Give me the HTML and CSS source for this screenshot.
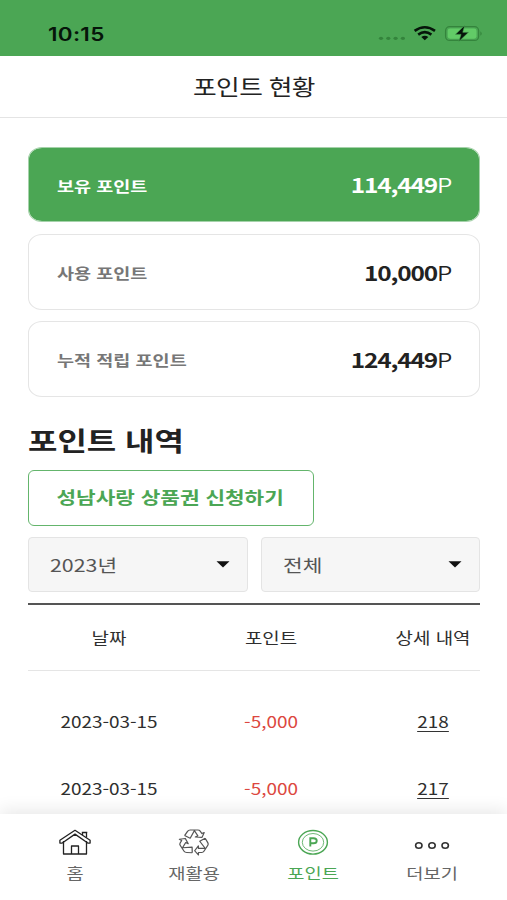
FILE: index.html
```html
<!DOCTYPE html>
<html lang="ko">
<head>
<meta charset="utf-8">
<title>포인트 현황</title>
<link rel="stylesheet" href="styles.css">
</head>
<body>
<div class="app">
  <header class="status">
    <span class="clock wide left">10:15</span>
    <svg class="indicators" width="108" height="24" viewBox="0 0 108 24">
      <g fill="#34843c"><ellipse cx="6" cy="15.3" rx="2.1" ry="1.6"/><ellipse cx="13.3" cy="15.3" rx="2.1" ry="1.6"/><ellipse cx="20.6" cy="15.3" rx="2.1" ry="1.6"/><ellipse cx="27.9" cy="15.3" rx="2.1" ry="1.6"/></g>
      <g fill="none" stroke="#06150a" stroke-width="2.6"><path d="M39.6 7.9Q49.8 .6 60 7.9"/><path d="M43.2 11.6Q49.8 6.8 56.4 11.6"/></g>
      <path d="M46.3 14Q49.8 11.7 53.3 14L49.8 17.3Z" fill="#06150a"/>
      <rect x="70.6" y="3.7" width="33" height="13.7" rx="4" fill="none" stroke="#34843c" stroke-width="1.3"/>
      <rect x="72.7" y="5.4" width="28.8" height="10.3" rx="2.4" fill="#62cb67"/>
      <path d="M105.4 8.2Q108 10.5 105.4 12.8Z" fill="#34843c"/>
      <path d="M89.8 2.2L80.3 11.4H86L83.8 18.6L93.6 9.3H87.8Z" fill="#06150a" stroke="#4ba654" stroke-width=".6"/>
    </svg>
  </header>
  <div class="titlebar"><h1 class="wide">포인트 현황</h1></div>

  <main>
    <section class="cards">
      <div class="card active"><span class="label wide left">보유 포인트</span><span class="value wide right">114,449<i>P</i></span></div>
      <div class="card"><span class="label wide left">사용 포인트</span><span class="value wide right">10,000<i>P</i></span></div>
      <div class="card"><span class="label wide left">누적 적립 포인트</span><span class="value wide right">124,449<i>P</i></span></div>
    </section>
    <h2 class="wide left">포인트 내역</h2>
    <button class="apply"><span class="wide">성남사랑 상품권 신청하기</span></button>
    <div class="filters">
      <div class="select"><span class="wide left">2023년</span><svg width="14" height="7" viewBox="0 0 14 7"><path d="M.5.3H13.5L7 6.5Z"/></svg></div>
      <div class="select"><span class="wide left">전체</span><svg width="14" height="7" viewBox="0 0 14 7"><path d="M.5.3H13.5L7 6.5Z"/></svg></div>
    </div>
    <div class="table">
      <div class="row head"><span class="wide">날짜</span><span class="wide">포인트</span><span class="wide">상세 내역</span></div>
      <div class="row"><span class="wide">2023-03-15</span><span class="wide minus">-5,000</span><span class="wide"><a>218</a></span></div>
      <div class="row"><span class="wide">2023-03-15</span><span class="wide minus">-5,000</span><span class="wide"><a>217</a></span></div>
    </div>
  </main>

  <nav>
    <div class="tab">
      <svg width="34" height="28" viewBox="0 0 34 28" fill="none" stroke="#222" stroke-width="1.3" stroke-linejoin="round">
        <path d="M5.5 13V26H28.5V13M13.5 26V18H20.5V26"/>
        <path d="M17 2.3L1.9 12.2V15L3.9 15.2L17 6.1L30.1 15.2L32.1 15V12.2Z"/>
        <path d="M24.5 7V4.5H28.5V9.5M23.8 4.3H29.3"/>
      </svg>
      <span class="wide">홈</span>
    </div>
    <div class="tab">
      <svg width="34" height="28" viewBox="0 0 34 28" fill="none" stroke="#555" stroke-width="1.25" stroke-linejoin="round">
        <g transform="translate(17 14.2) scale(.98 .87)">
          <path id="arrow" d="M-9.6-7.6L-6.6-12.4Q-5.6-14-4-14H4Q5.5-14 6.3-12.7L8-9.9L10.4-11.2L8.2-5.5L1.4-6L3.9-7.5L.2-13.6M-9.6-7.6L-3.9-4.5L.2-13"/>
          <use href="#arrow" transform="rotate(120)"/>
          <use href="#arrow" transform="rotate(240)"/>
        </g>
      </svg>
      <span class="wide">재활용</span>
    </div>
    <div class="tab on">
      <svg width="34" height="28" viewBox="0 0 34 28" fill="none" stroke="#4ba654">
        <ellipse cx="17" cy="14.3" rx="14.4" ry="11.8" stroke-width="1.4"/><ellipse cx="17" cy="14.3" rx="10.7" ry="8.8" stroke-width=".8"/>
        <path d="M14.3 18.6V10.2H17.5C21.8 10.2 21.8 15.3 17.5 15.3H14.3" stroke-width="1.9"/>
      </svg>
      <span class="wide">포인트</span>
    </div>
    <div class="tab">
      <svg width="38" height="28" viewBox="0 0 38 28" fill="none" stroke="#333" stroke-width="1.6">
        <ellipse cx="5.8" cy="17.5" rx="3.2" ry="2.8"/><ellipse cx="19" cy="17.5" rx="3.2" ry="2.8"/><ellipse cx="32.2" cy="17.5" rx="3.2" ry="2.8"/>
      </svg>
      <span class="wide">더보기</span>
    </div>
  </nav>
</div>
</body>
</html>
```

FILE: styles.css
```css
* { box-sizing: border-box; }
body { margin: 0; background: #fff; color: #222; font-family: "Noto Sans CJK KR", sans-serif; }
.app { height: 900px; overflow: hidden; display: flex; flex-direction: column; }
/* Type is set extended: every label is stretched horizontally. */
.wide { display: inline-block; white-space: nowrap; transform: scaleX(1.22); transform-origin: center; }
.left { transform-origin: left; }
.right { transform-origin: right; }
.status { height: 56px; flex: none; background: #4ba654; display: flex; justify-content: space-between; align-items: flex-start; padding: 23px 24px 0 48px; }
.clock { font: 600 18.4px/22px Inter, sans-serif; letter-spacing: .25px; color: #06150a; }
.indicators { flex: none; }
.titlebar { height: 62px; flex: none; border-bottom: 1px solid #e4e4e4; display: flex; align-items: center; justify-content: center; }
h1 { margin: 0 0 1px; font-size: 21.1px; line-height: 30px; font-weight: 400; letter-spacing: -.5px; }
main { flex: 1; min-height: 0; padding: 29px 27px 0 28px; overflow: hidden; }
.cards { display: grid; gap: 11px; }
.card { height: 76px; border: 1px solid #e5e5e5; border-radius: 14px / 12px; padding: 0 27px 0 28px; display: flex; align-items: center; justify-content: space-between; }
.card.active { height: 75px; margin-bottom: 1px; border-color: #a5d2aa; background: #4ba654 padding-box; color: #fff; }
.label { font-size: 15.2px; font-weight: 700; color: #777; }
.active .label { color: #fff; }
.value { font-size: 20px; font-weight: 700; letter-spacing: -.95px; }
.value i { font-style: normal; font-weight: 350; letter-spacing: 0; }
h2 { margin: 24px 0 0; font-size: 26.2px; line-height: 38px; font-weight: 700; }
.wide.left:is(h2) { display: block; width: 200px; }
.apply { display: flex; align-items: center; justify-content: center; width: 286px; height: 56px; margin: 11px 0 0; padding: 0 2px 2px 0; border: 1.5px solid #64b56c; border-radius: 6px; background: #fff; color: #4ba654; font: 700 17.45px/24px "Noto Sans CJK KR", sans-serif; }
.filters { display: grid; grid-template-columns: 1fr 1fr; gap: 13px; margin-top: 11px; }
.select { height: 55px; border: 1px solid #e4e4e4; border-radius: 4px; background: #f6f6f6; display: flex; align-items: center; justify-content: space-between; padding: 0 17px 0 21px; font-size: 17.5px; color: #555; }
.select span { margin-bottom: 1px; }
.select svg { fill: #111; }
.table { margin-top: 11px; border-top: 2px solid #555; overflow: hidden; }
.row { display: grid; grid-template-columns: 162px 162px 162px; height: 66.5px; align-items: center; text-align: center; font-size: 15.5px; line-height: 22px; color: #2e2e2e; }
.head { height: 66px; border-bottom: 1px solid #e5e5e5; margin-bottom: 17px; padding-bottom: 1px; }
.row .minus { color: #dc4740; }
.row a { display: inline-block; line-height: 20px; border-bottom: 1px solid #333; }
nav { height: 86px; flex: none; position: relative; background: #fff; box-shadow: 0 -4px 16px rgba(0,0,0,.09); display: grid; grid-template-columns: repeat(4, 119px); justify-content: center; }
.tab { display: flex; flex-direction: column; align-items: center; padding-top: 14px; font-size: 15.3px; line-height: 22px; color: #666; }
.tab .wide { margin-top: 5px; }
.tab.on { color: #4ba654; }
```
